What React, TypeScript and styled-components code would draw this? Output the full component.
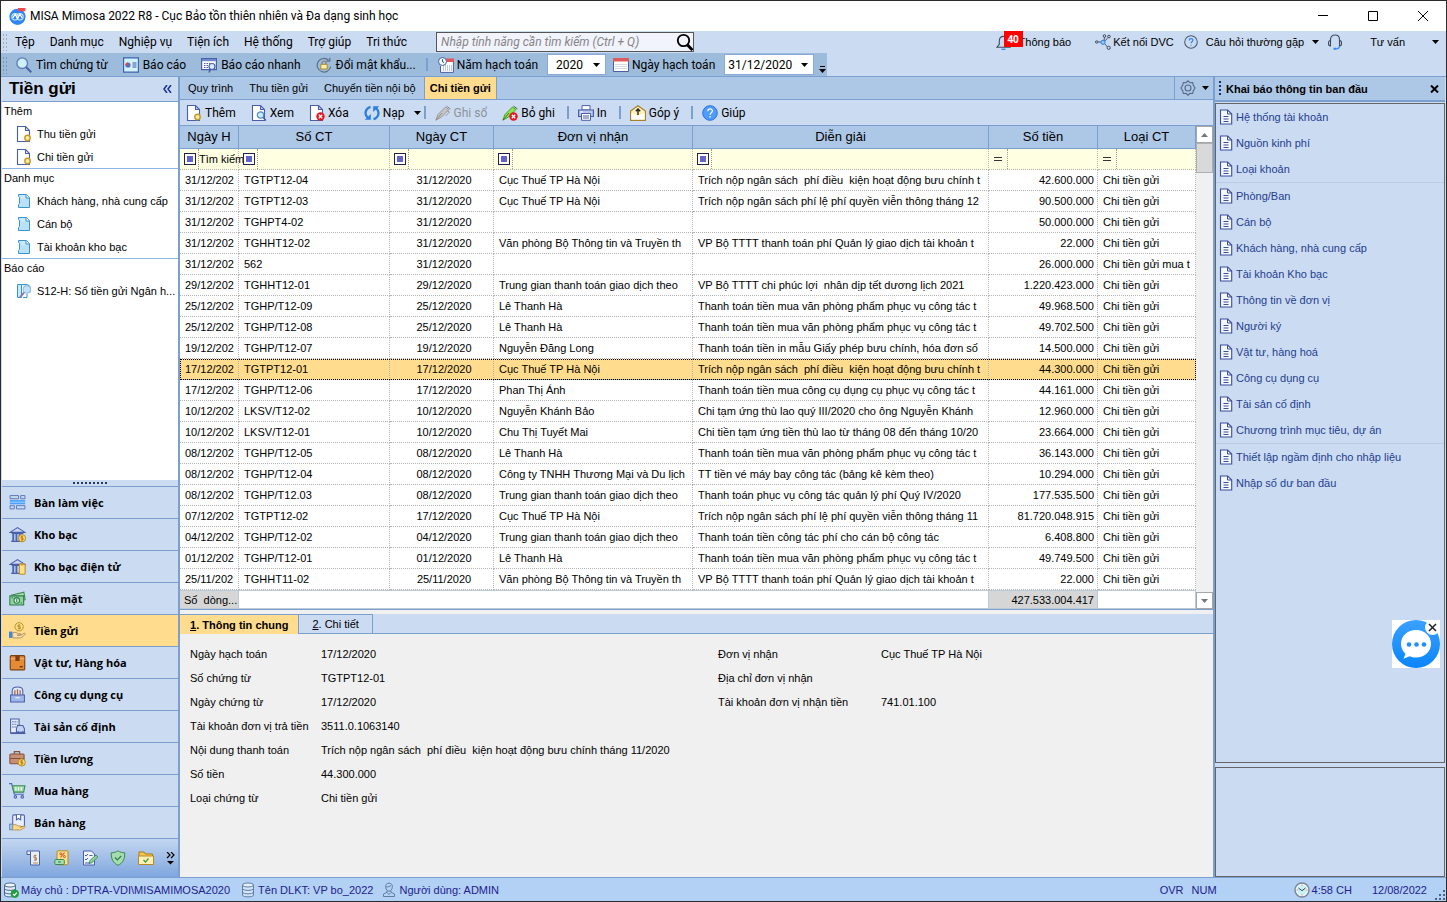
import React from "react";
import styled, { createGlobalStyle, css } from "styled-components";

const c = {
  light: "#cbdbf1",
  bar: "#9dbbdb",
  mid: "#adc7e7",
  line: "#7ba0d0",
  active: "#ffdc8e",
  status: "#b3d0f5",
  grey: "#f0f0f0",
  navy: "#1f4090",
};
const sans = `"Liberation Sans", Arial, sans-serif`;
const ui = `Roboto, "Segoe UI", sans-serif`;

const Global = createGlobalStyle`
  * { box-sizing: border-box; }
  body { margin: 0; font-family: ${sans}; font-size: 11px; line-height: 14px; color: #000; }
  button, input, select { font: inherit; color: inherit; margin: 0; padding: 0; border: 0; background: none; border-radius: 0; }
  button { white-space: nowrap; }
  svg { display: block; flex: none; }
`;

/* ---------- icons ---------- */
type IconProps = { s?: number; children: React.ReactNode };
const Svg = ({ s = 16, children }: IconProps) => (
  <svg width={s} height={s} viewBox="0 0 16 16" fill="none" aria-hidden="true">
    {children}
  </svg>
);
const Arrow = ({ color = "#000" }: { color?: string }) => (
  <svg width="7" height="4" viewBox="0 0 7 4" aria-hidden="true">
    <path d="M0 0h7L3.5 4z" fill={color} />
  </svg>
);
const B = "#4a5fa8";
const pageShape = <path d="M1.5.5h8l4 4v11h-12z M9.500.5v4h4" fill="#fff" stroke={B} strokeWidth="1.1" />;

const icons: Record<string, React.ReactNode> = {
  logo: (
    <>
      <circle cx="8" cy="8.3" r="7.6" fill="#2f86f0" />
      <circle cx="5.7" cy="8.3" r="3" stroke="#cfe6ff" />
      <circle cx="10.3" cy="8.3" r="3" stroke="#cfe6ff" />
      <path d="M3.5 9.500 5.700 6 8 9.500 10.300 6l2.200 3.500" stroke="#fff" strokeWidth="1.1" />
      <path d="M8.500 0h7v3h-7z" fill="#f04a4a" />
    </>
  ),
  search: (
    <>
      <circle cx="6.2" cy="6.2" r="5.300" fill="#cfeefe" stroke="#5c7eb4" strokeWidth="1.300" />
      <path d="m10 10 5.300 5.300" stroke="#4a62a8" strokeWidth="2" />
    </>
  ),
  report: (
    <>
      <path d="M.6.900h14.800v14.300H.6z" fill="#d3f0fd" stroke="#3d63b0" strokeWidth="1.2" />
      <circle cx="5" cy="8" r="2.600" fill="#5b6fb4" />
      <path d="M5 8V5.400A2.600 2.600 0 0 0 2.400 8z" fill="#e04545" />
      <path d="M9.500 6h4M9.500 8h4M9.500 10h4" stroke="#3a57a0" />
    </>
  ),
  quick: (
    <>
      <path d="M.6 1.600h14.800v11H.6z" fill="#fff" stroke={B} strokeWidth="1.2" />
      <path d="M1 2h14v2.200H1z" fill="#7089c8" />
      <path d="M3 6.500h8M3 8.500h6M3 10.500h5" stroke={B} strokeDasharray="1.5 1" />
      <circle cx="11" cy="9.500" r="3" fill="#d6f0ff" stroke={B} strokeWidth="1.2" />
      <path d="m9.500 12-1.500 3.500" stroke={B} strokeWidth="1.6" />
    </>
  ),
  lock: (
    <>
      <path d="M12.600 3.200A6.800 6.800 0 1 0 14.700 9.500" stroke="#5f7089" strokeWidth="1.200" />
      <path d="M13.800.8v3.400h-3.600" stroke="#5f7089" strokeWidth="1.200" />
      <path d="M4.800 7.300h6.400v4.700H4.800z" fill="#fff0a8" stroke="#b08a28" />
      <path d="M6 7.200V6a2 2 0 0 1 4 0v1.200" stroke="#8b7a50" />
    </>
  ),
  calClock: (
    <>
      <path d="M3.500 2.500h11.900v12.900H2.500V9" fill="#fff" stroke={B} />
      <path d="M6 1.500h10v3.500H6z" fill="#e05555" />
      <path d="M5 9h9M5 11h9M5 13h9" stroke="#8090b8" strokeDasharray="1 1" />
      <circle cx="4.500" cy="4.500" r="4" fill="#eef6ff" stroke={B} />
      <path d="M4.500 2.300v2.400l1.500.800" stroke="#444" />
    </>
  ),
  cal: (
    <>
      <path d="M.5 1.500h15v13H.5z" fill="#fff" stroke={B} />
      <path d="M0 1h16v3.500H0z" fill="#dd5a5a" />
      <path d="M2.500 7.500h11M2.500 9.500h11M2.500 11.500h11" stroke="#a9b4cc" strokeDasharray="1 1" />
    </>
  ),
  add: (
    <>
      {pageShape}
      <circle cx="11.500" cy="12" r="2.700" fill="#fdeaa2" stroke="#c39a2c" strokeWidth="1.4" />
    </>
  ),
  view: (
    <>
      {pageShape}
      <circle cx="9.500" cy="10" r="3.200" fill="#c5ecfb" stroke="#5c86bb" strokeWidth="1.2" />
      <path d="m12 12.500 3 3" stroke="#4a62a8" strokeWidth="1.5" />
    </>
  ),
  del: (
    <>
      {pageShape}
      <circle cx="11.500" cy="11.500" r="4.200" fill="#e01820" />
      <path d="m9.800 9.800 3.400 3.400m0-3.400-3.400 3.400" stroke="#fff" strokeWidth="1.3" />
    </>
  ),
  reload: (
    <>
      <path d="M6.500 1.800C1 3.500 0 9.500 4 13" stroke="#2c7fe0" strokeWidth="2.300" />
      <path d="M.8 14.800h6V9z" fill="#2c7fe0" />
      <path d="M9.500 14.200C15 12.500 16 6.500 12 3" stroke="#2c7fe0" strokeWidth="2.300" />
      <path d="M15.200 1.200h-6v5.800z" fill="#2c7fe0" />
    </>
  ),
  penGrey: (
    <>
      <path d="M.8 15.200 3 9.500 10.500 2l3.500 2.500L6.500 12z" fill="#c4c4c4" stroke="#999" />
      <path d="M1 15 7 8M11.500 1l4 3" stroke="#8e8e8e" />
      <path d="M12 5.500 14.500 7l-4 4" stroke="#999" />
    </>
  ),
  penGreen: (
    <>
      <path d="M.8 15.200 3 9.500 10.500 2l3.500 2.500L6.500 12z" fill="#8ee34a" stroke="#4f9a2a" />
      <path d="M1 15 7 8M11.500 1l4 3" stroke="#3f7a22" />
      <circle cx="11.500" cy="11.500" r="4.200" fill="#e01820" />
      <path d="m9.800 9.800 3.400 3.400m0-3.400-3.400 3.400" stroke="#fff" strokeWidth="1.3" />
    </>
  ),
  print: (
    <>
      <path d="M4 .6h8V5H4z" fill="#fff" stroke={B} />
      <path d="M.6 5h14.800v6.500H.6z" fill="#b9c8ea" stroke={B} strokeWidth="1.2" />
      <path d="M3.500 8.500h9v6.800h-9z" fill="#fff" stroke={B} />
      <path d="M5 11h6M5 13h6" stroke={B} />
      <path d="M2 7h3" stroke="#fff" />
    </>
  ),
  mail: (
    <>
      <path d="M.6 6 8 .8 15.400 6v9.400H.6z" fill="#fff1b8" stroke="#a8812a" strokeWidth="1.2" />
      <path d="M1.400 14.600V8L8 11l6.600-3v6.600z" fill="#fff" />
      <path d="M8 10V4.500M5.800 6.200 8 4l2.200 2.200" stroke="#222" strokeWidth="1.4" />
    </>
  ),
  help: (
    <>
      <circle cx="8" cy="8" r="7.300" fill="#4d9bfa" stroke="#2f73d8" />
      <path d="M5.800 6.200C5.800 3.200 10.500 3.300 10.400 6c0 1.700-2.300 1.700-2.300 3.700M8.100 11v1.400" stroke="#fff" strokeWidth="1.2" />
    </>
  ),
  helpLine: (
    <>
      <circle cx="8" cy="8" r="7.200" stroke="#4b5a75" strokeWidth="1.200" />
      <path d="M5.900 6.200C5.900 3.400 10.300 3.500 10.200 6c0 1.700-2.200 1.700-2.200 3.500M8 11v1.300" stroke="#2f7fe8" strokeWidth="1.300" />
    </>
  ),
  bell: (
    <>
      <path d="M8 1.500C5 1.500 3.500 3.500 3.500 6.500V10l-2.500 3h14L12.500 10V6.500C12.500 3.500 11 1.500 8 1.500z" stroke="#3f4a5e" strokeWidth="1.2" />
      <path d="M6 14.500c1 1.200 3 1.200 4 0" stroke="#2f8cf0" strokeWidth="1.4" />
    </>
  ),
  net: (
    <>
      <path d="M3 8h4M9 7l.500-4M9.500 9.500l3 3.500M9.500 7.500l3.500-4" stroke="#4b5a75" />
      <circle cx="8" cy="8.300" r="2.100" fill="#8fc5ff" stroke="#2f7fe8" />
      <circle cx="1.700" cy="8" r="1.200" stroke="#3f4a5e" />
      <circle cx="9.500" cy="2" r="1.300" stroke="#3f4a5e" />
      <circle cx="14" cy="2.500" r="1.300" stroke="#3f4a5e" />
      <circle cx="13.700" cy="13.800" r="1.600" stroke="#3f4a5e" />
    </>
  ),
  headset: (
    <>
      <path d="M3.500 7V5.500C3.500 2.500 5.500 1 8 1s4.500 1.500 4.500 4.500V7" stroke="#3f4a5e" strokeWidth="1.1" />
      <path d="M3.500 6.500C.8 6.500.8 12 3.500 12zM12.500 6.500c2.700 0 2.700 5.500 0 5.500z" stroke="#3f4a5e" strokeWidth="1.1" />
      <path d="M12.500 12c0 2-1.500 2.800-3.500 2.800" stroke="#2f8cf0" strokeWidth="1.3" />
      <path d="M6.500 14.800h2.500" stroke="#2f8cf0" strokeWidth="2" />
    </>
  ),
  gear: (
    <>
      <path d="M8 .8 10 2.700l2.700-.2.500 2.600L15 8l-1.800 2.900-.5 2.600-2.700-.2L8 15.200l-2-1.900-2.700.2-.5-2.600L1 8l1.800-2.900.5-2.600 2.700.2z" stroke="#56688a" strokeWidth="1.1" />
      <circle cx="8" cy="8" r="3" stroke="#56688a" strokeWidth="1.1" />
    </>
  ),
  bluePage: (
    <>
      <path d="M2.500 1.500h8L13.500 4.500v10h-11v-3l1-1v-6l-1-1z" fill="#b9e1fb" stroke="#3a93d2" />
      <path d="M10 1.500v3.500h3.500" fill="#fff" stroke="#3a93d2" />
      <path d="M5 3h4M5 5h4" stroke="#e3f5ff" />
    </>
  ),
  sheetView: (
    <>
      <path d="M1.500 1.500h4v13h-4zM5.500 1.500h6l2.500 2v6" fill="#c6e8fc" stroke="#3a93d2" />
      <circle cx="10.800" cy="6.500" r="3.800" fill="#bfe3fb" stroke="#8fb5dc" />
      <path d="m8 9.500-4 5" stroke="#7b74c9" strokeWidth="2" />
      <path d="M7 14.500h4V11" stroke="#3a93d2" />
    </>
  ),
  doc: (
    <>
      <path d="M2.500 1h7.200l4 4v10H2.500z" fill="#f4f8ff" stroke="#3b4f9c" strokeWidth="1.1" />
      <path d="M9.500 1v4h4" stroke="#3b4f9c" />
      <path d="M5.500 7.500h5M5.500 10h5M5.500 12.500h5" stroke="#3b4f9c" />
    </>
  ),
  desk: (
    <>
      <path d="M.8 5.700h14.400v4H.8z" fill="#4da0ff" />
      <path d="M1 1.500h8v3H1zM11 1.500h4v3h-4zM1 11h4v3H1zM7 11h8v3H7z" fill="#c8dcfa" stroke="#5873b5" strokeWidth=".9" />
      <path d="M1 7.700h14" stroke="#b4dcff" strokeWidth=".8" />
    </>
  ),
  bank: (
    <>
      <path d="M1 6 8 1.500 15 6z" fill="#c8d5f3" stroke={B} />
      <path d="M2 14.500h12M2.500 7h11" stroke={B} strokeWidth="1.2" />
      <path d="M4 7v7M7 7v7M10 7v7" stroke="#4a62b4" strokeWidth="1.8" />
      <circle cx="12.300" cy="11.500" r="3.400" fill="#fbd66a" stroke="#b98a22" strokeWidth=".9" />
      <path d="M13.300 10h-2v1.500h2V13h-2M12.300 9v5" stroke="#a87818" strokeWidth=".7" />
    </>
  ),
  bankE: (
    <>
      <path d="M1 6 8 1.500 15 6z" fill="#c8d5f3" stroke={B} />
      <path d="M2 14.500h9M2.500 7h11" stroke={B} strokeWidth="1.2" />
      <path d="M4 7v7M7 7v7" stroke="#4a62b4" strokeWidth="1.8" />
      <rect x="9.700" y="5.500" width="5.500" height="9.800" rx="1.300" fill="#fde08a" stroke="#b98a22" />
      <path d="M11.500 6.500h2" stroke="#b98a22" />
    </>
  ),
  cash: (
    <>
      <path d="M2 5 14 2l1.200 7L13 10" fill="#a8deb0" stroke="#3d8a56" />
      <path d="M.8 5.500h13v8.700H.8z" fill="#8fd3a0" stroke="#2f7d4b" />
      <circle cx="7.300" cy="9.800" r="2.600" fill="#d8f3dc" stroke="#2f7d4b" />
      <path d="M7.300 8.300v3M2.500 7.300h1.300M11 12.300h1.300" stroke="#2f7d4b" />
    </>
  ),
  deposit: (
    <>
      <circle cx="9.500" cy="4.500" r="3.900" fill="#fbe08a" stroke="#b98a22" strokeWidth=".9" />
      <path d="M10.800 3H8.400v1.600h2.300v1.600H8.300M9.500 2v5.200" stroke="#b98a22" strokeWidth=".8" />
      <path d="M0 9h3v6H0z" fill="#3c86ea" />
      <path d="M3.500 9.800h3l2 1.200h2c1 0 1 1.400 0 1.400H7.500 11l3.500-1.800c1 0 1.200 1 .3 1.600L11 15H3.500z" fill="#fbe3ae" stroke="#a9885a" strokeWidth=".8" />
    </>
  ),
  box: (
    <>
      <rect x="1.200" y="1.500" width="13.600" height="13.500" rx="1" fill="#e58a35" stroke="#7b4418" strokeWidth="1.1" />
      <path d="M1.500 4.500h13" stroke="#f5b06a" />
      <path d="M6 1.500h4v5H6z" fill="#7b3c18" />
      <path d="M10 12h3" stroke="#5a2c0c" strokeWidth="1.2" />
    </>
  ),
  tools: (
    <>
      <path d="M3 9V4.500C3 2.500 5 1 8 1s5 1.500 5 3.500V9z" fill="#dfe7f8" stroke={B} />
      <path d="M5.500 9V4M8 9V3M10.500 9V4" stroke="#a86a48" strokeWidth="1.2" />
      <path d="M1.500 8.500h13V15h-13z" fill="#9db6ec" stroke={B} />
      <path d="M6 11h4" stroke="#e6efff" strokeWidth="1.2" />
    </>
  ),
  asset: (
    <>
      <path d="M1.500 1h8v13h-8z" fill="#e6edfb" stroke={B} />
      <path d="M3 3.500h5M3 6h5M3 8.500h4" stroke="#6f86c4" strokeDasharray="1.3 .8" strokeWidth="1.3" />
      <path d="m7 10 1-3h5l1.500 3v3.500H7z" fill="#c4d3f2" stroke={B} />
      <path d="M1.500 14.500h14" stroke={B} strokeWidth="1.2" />
      <circle cx="8.700" cy="13.500" r="1" fill={B} />
      <circle cx="13" cy="13.500" r="1" fill={B} />
    </>
  ),
  salary: (
    <>
      <path d="M5 4V1.500h5V4" stroke="#84513c" strokeWidth="1.1" />
      <rect x=".8" y="3.800" width="13.400" height="9.200" rx="1" fill="#c98f74" stroke="#84513c" />
      <path d="M1 8h13" stroke="#84513c" />
      <circle cx="12" cy="11.700" r="3.400" fill="#fbd66a" stroke="#b98a22" strokeWidth=".9" />
      <path d="M13 10.200h-2v1.500h2v1.500h-2M12 9.200v5" stroke="#a87818" strokeWidth=".7" />
    </>
  ),
  cart: (
    <>
      <path d="M0 1.500h2.500L5 11.500h9" stroke="#4a72b8" strokeWidth="1.1" />
      <path d="M3.200 3.500H15l-1.200 6H4.600z" fill="#9edba8" stroke="#3d8a56" />
      <path d="M6.500 5v3M9 5v3M11.500 5v3" stroke="#fff" />
      <circle cx="6" cy="14" r="1.200" stroke="#4f62b0" />
      <circle cx="12.500" cy="14" r="1.200" stroke="#4f62b0" />
    </>
  ),
  sell: (
    <>
      <rect x="3.500" y=".8" width="11" height="11" rx="1" fill="#e9f0ff" stroke={B} />
      <path d="M7 1v4.500l2-1.300 2 1.300V1" fill="#fff" stroke={B} />
      <path d="M.3 9.500h3.200v5.300H.3z" fill="#8fc4f7" stroke="#4a72b8" strokeWidth=".7" />
      <path d="M3.500 10h3l2 1.200h2.200c1 0 1 1.300 0 1.300H11l3.500-1.200c.9.200 1 1 .2 1.500L11 15H3.500z" fill="#fbd98d" stroke="#b98a4a" strokeWidth=".8" />
    </>
  ),
  invoice: (
    <>
      <path d="M1 1h12.500v14H4.500V4.500H1z" fill="#e7eefc" stroke={B} />
      <path d="M4.500 4.500V1.500" stroke={B} />
      <path d="M10.500 5.500H8v2.300h2.500V10H8M9.200 4.500v6.500M7 13h5" stroke="#b98a4a" />
    </>
  ),
  tax: (
    <>
      <rect x="3" y=".8" width="11" height="14" rx="1" fill="#fbe08a" stroke="#b98a22" />
      <path d="m6.500 7.500 4-5" stroke="#d8502a" strokeWidth="1.1" />
      <circle cx="6.800" cy="3.800" r="1" stroke="#d8502a" />
      <circle cx="10.300" cy="6.500" r="1" stroke="#d8502a" />
      <rect x=".8" y="9.500" width="9.500" height="5" rx="1" fill="#a8deb0" stroke="#3d8a56" />
      <path d="M4 12h3" stroke="#3d8a56" strokeWidth="1.2" />
    </>
  ),
  note: (
    <>
      <path d="M1.500 1h8l3 3v11h-11z" fill="#eef3fe" stroke={B} />
      <path d="m3 5 1 1 2-2M3 9l1 1 2-2M7.500 5.500h3M3 13h5" stroke={B} />
      <path d="m7 13.500 1-3 6-5.500 1.800 2L10 12.700z" fill="#93d2a0" stroke="#3d8a56" strokeWidth=".9" />
    </>
  ),
  shield: (
    <>
      <path d="M8 .8c2 1.500 4.500 2 6.800 2C14.800 9 13 13 8 15.300 3 13 1.200 9 1.200 2.800 3.500 2.800 6 2.300 8 .8z" fill="#a4dcae" stroke="#3d8a56" />
      <path d="m5 7.500 2.300 2.500L11.200 6" stroke="#2f7d4b" strokeWidth="1.2" />
    </>
  ),
  folder: (
    <>
      <path d="M1 14V2h5l1.500 2h7v10z" fill="#f6c64a" stroke="#a87818" />
      <path d="M.5 6h15v8.500H.5z" fill="#fff0b8" stroke="#b98a22" />
      <path d="m5.500 10 2 2 3-3.500" stroke="#3f9a3a" strokeWidth="1.2" />
    </>
  ),
  dbOk: (
    <>
      <path d="M1.500 3v10c0 2.500 11 2.500 11 0V3" fill="#dfeaf8" stroke="#4b6b8e" />
      <ellipse cx="7" cy="3" rx="5.500" ry="2" fill="#f2f7fd" stroke="#4b6b8e" />
      <path d="M1.500 6.500c0 2.500 11 2.500 11 0M1.500 10c0 2.500 11 2.500 11 0" stroke="#4b6b8e" />
      <circle cx="11.800" cy="11.800" r="4.100" fill="#1f9e3d" />
      <path d="m10 12 1.500 1.300 2.300-2.600" stroke="#fff" strokeWidth="1.2" />
    </>
  ),
  db: (
    <>
      <path d="M2.500 3v10c0 2.500 11 2.500 11 0V3" fill="#d3e4f8" stroke="#5f7fa4" />
      <ellipse cx="8" cy="3" rx="5.500" ry="2" fill="#e6f0fb" stroke="#5f7fa4" />
      <path d="M2.500 6.500c0 2.500 11 2.500 11 0M2.500 10c0 2.500 11 2.500 11 0" stroke="#5f7fa4" />
    </>
  ),
  user: (
    <>
      <path d="M8 1.200c-2.700 0-3.600 1.800-3.300 4 .3 2.500 1.600 4 3.300 4s3-1.500 3.300-4c.3-2.200-.6-4-3.300-4z" stroke="#5f7fa4" />
      <path d="M6 8.800v1.400L2.500 12v2.500h11V12L10 10.200V8.800M5 5c2 0 4-.5 5-1.500M6 10.500l2 2 2-2" stroke="#5f7fa4" />
    </>
  ),
  clock: (
    <>
      <circle cx="8" cy="8" r="7" fill="#c9f0f5" stroke="#7a8794" strokeWidth="1.4" />
      <circle cx="8" cy="8" r="5.500" stroke="#fff" />
      <path d="M4.500 6 8 8.700 11.500 6" stroke="#3f4a5e" />
      <path d="M8 2.500v1M8 12.500v1M2.500 8h1M12.500 8h1" stroke="#e05555" />
    </>
  ),
};
const Icon = ({ n, s }: { n: string; s?: number }) => <Svg s={s}>{icons[n]}</Svg>;

/* ---------- frame ---------- */
const Window = styled.div`
  min-height: 100vh;
  display: flex;
  flex-direction: column;
  border: 1px solid #2b2b2b;
  background: ${c.light};
`;
const TitleBar = styled.header`
  height: 30px;
  display: flex;
  align-items: center;
  gap: 4px;
  padding-left: 8px;
  background: #fff;
`;
const Title = styled.h1`
  flex: 1;
  margin: 0;
  font: 400 12px/16px ${ui};
`;
const WinButton = styled.button`
  width: 46px;
  height: 30px;
  display: grid;
  place-items: center;
`;
const Grip = styled.span<{ $c?: string }>`
  width: 6px;
  height: 18px;
  flex: none;
  background-image: radial-gradient(${(p) => p.$c || "#a3adba"} 1px, transparent 1px);
  background-size: 3px 4px;
`;
const MenuBar = styled.nav`
  height: 22px;
  display: flex;
  align-items: center;
  padding: 0 7px 0 1px;
`;
const MenuItem = styled.button`
  padding: 0 8px 0 7px;
  font: 400 12px/16px ${ui};
`;
const Spacer = styled.span`
  flex: 1;
`;
const SearchBox = styled.div`
  width: 258px;
  height: 20px;
  margin-left: 21px;
  display: flex;
  align-items: center;
  border: 1px solid #555;
  background: #f1f3fd;
  padding-left: 4px;
  input {
    flex: 1;
    min-width: 0;
    outline: 0;
    font: italic 400 12px/16px ${ui};
  }
  input::placeholder {
    color: #858585;
    opacity: 1;
  }
`;
const Utility = styled.button<{ $gap?: number; $ml?: number }>`
  position: relative;
  display: flex;
  align-items: center;
  gap: ${(p) => p.$gap ?? 3}px;
  margin-left: ${(p) => p.$ml ?? 0}px;
  line-height: 16px;
`;
const Badge = styled.span`
  position: absolute;
  left: 8px;
  top: -3px;
  width: 19px;
  height: 16px;
  background: #f00;
  color: #fff;
  font: 700 10px/16px "Open Sans", sans-serif;
`;
const ToolStrip = styled.div`
  height: 23px;
  display: flex;
`;
const Tools = styled.div`
  height: 23px;
  padding: 0 1px;
  background: ${c.bar};
  display: flex;
  align-items: center;
`;
const ToolButton = styled.button`
  height: 22px;
  display: flex;
  align-items: center;
  gap: 4px;
  padding: 0 7px 0 8px;
  font: 400 12px/16px ${ui};
  &:disabled {
    color: #8b929c;
  }
`;
const Sep = styled.span`
  width: 2px;
  height: 13px;
  flex: none;
  margin: 0 3px;
  background: ${c.line};
`;
const Field = styled.label`
  display: flex;
  align-items: center;
  gap: 3px;
  padding-left: 7px;
  white-space: nowrap;
  font: 400 12px/16px ${ui};
`;
const Combo = styled.span<{ $w: number }>`
  position: relative;
  width: ${(p) => p.$w}px;
  height: 21px;
  margin-left: 6px;
  border: 1px solid #8aa8dc;
  background: #fff;
  select {
    appearance: none;
    width: 100%;
    height: 100%;
    padding-left: ${(p) => (p.$w < 70 ? 8 : 3)}px;
    outline: 0;
  }
  svg {
    position: absolute;
    right: 5px;
    top: 8px;
    pointer-events: none;
  }
`;
const Overflow = styled.button`
  margin: 10px 0 0 5px;
  display: grid;
  gap: 2px;
  &::before {
    content: "";
    width: 5px;
    height: 1px;
    margin-left: 1px;
    background: #000;
  }
`;
const Main = styled.main`
  flex: 1;
  display: grid;
  grid-template-columns: 179px minmax(0, 1fr) 233px;
  border-top: 1px solid ${c.line};
`;

/* ---------- left ---------- */
const Sidebar = styled.aside`
  display: flex;
  flex-direction: column;
  border-right: 2px solid ${c.line};
  padding-left: 1px;
`;
const SideHead = styled.div`
  height: 25px;
  display: flex;
  align-items: center;
  justify-content: space-between;
  padding: 0 6px 0 7px;
  border-bottom: 1px solid ${c.line};
  h2 {
    margin: 0;
    font: 700 17px/22px ${sans};
  }
`;
const Tree = styled.div`
  flex: 1;
  background: #fff;
`;
const Group = styled.section<{ $last?: boolean }>`
  border-bottom: ${(p) => (p.$last ? 0 : 1)}px solid #8fb4e8;
  h3 {
    margin: 0 0 2px;
    padding-left: 2px;
    font: 400 11px/18px ${sans};
  }
`;
const Leaf = styled.a`
  height: 23px;
  display: flex;
  align-items: center;
  gap: 5px;
  padding-left: 14px;
  color: #000;
  text-decoration: none;
  white-space: nowrap;
`;
const Splitter = styled.div`
  height: 6px;
  display: grid;
  place-items: center;
  &::before {
    content: "";
    width: 35px;
    height: 2px;
    background: repeating-linear-gradient(90deg, #2b3a5c 0 2px, transparent 2px 4px);
  }
`;
const NavButton = styled.button<{ $on?: boolean }>`
  height: 32px;
  display: flex;
  align-items: center;
  gap: 8px;
  padding-left: 7px;
  border-top: 1px solid ${c.line};
  background: ${(p) => (p.$on ? c.active : c.light)};
  font: 700 11px/16px "Open Sans", Tahoma, sans-serif;
`;
const NavFoot = styled.div`
  height: 39px;
  display: flex;
  align-items: center;
  gap: 12px;
  padding-left: 24px;
  border-top: 1px solid ${c.line};
  background: linear-gradient(#c3d6f0, #7fa6de);
`;

/* ---------- centre ---------- */
const Centre = styled.section`
  display: flex;
  flex-direction: column;
  min-width: 0;
`;
const Tabs = styled.div`
  height: 23px;
  display: flex;
  background: ${c.mid};
  border-bottom: 1px solid ${c.line};
`;
const Tab = styled.button<{ $on?: boolean }>`
  height: 22px;
  padding: 0 8px;
  ${(p) =>
    p.$on &&
    css`
      padding: 0 5px;
      background: ${c.active};
      border-left: 1px solid ${c.line};
      border-right: 1px solid ${c.line};
      font-weight: 700;
    `}
`;
const GearButton = styled.button`
  width: 39px;
  display: flex;
  align-items: center;
  gap: 6px;
  padding-left: 5px;
  border-left: 1px solid ${c.line};
`;
const GridTools = styled.div`
  height: 26px;
  display: flex;
  align-items: center;
  border-bottom: 1px solid ${c.line};
  ${ToolButton} {
    gap: 3px;
    padding: 0 9px 0 6px;
  }
`;
const GridArea = styled.div`
  display: flex;
  border-bottom: 1px solid ${c.line};
`;
const dots = "1px dotted #b4b4b4";
const Table = styled.table`
  flex: 1;
  width: 100%;
  min-width: 0;
  table-layout: fixed;
  border-collapse: separate;
  border-spacing: 0;
  background: #fff;
  th {
    height: 23px;
    padding: 0;
    background: ${c.mid};
    border-right: 1px solid ${c.line};
    border-bottom: 1px solid ${c.line};
    font: 400 13px/20px ${sans};
    white-space: nowrap;
    overflow: hidden;
  }
  td {
    height: 21px;
    padding: 0 0 0 5px;
    border-right: ${dots};
    border-bottom: ${dots};
    white-space: pre;
    overflow: hidden;
  }
`;
const FilterRow = styled.tr`
  background: #ffffe1;
  && td {
    overflow: visible;
    padding: 0 0 0 3px;
  }
`;
const FilterCell = styled.div`
  display: flex;
  align-items: center;
  height: 20px;
  input {
    width: 46px;
    height: 20px;
    flex: none;
    outline: 0;
    border-left: 1px dotted #999;
  }
`;
const FilterButton = styled.button<{ $eq?: boolean }>`
  position: relative;
  width: 12px;
  height: 12px;
  flex: none;
  margin: 0 2px 0 1px;
  ${(p) =>
    p.$eq
      ? css`
          background: linear-gradient(transparent 4px, #333 4px 5px, transparent 5px 7px, #333 7px 8px, transparent 8px)
            1px 0 / 8px 12px no-repeat;
        `
      : css`
          border: 1px solid #22224c;
          background: #6363cc;
          box-shadow: inset 0 0 0 2px #fff;
        `}
`;
const Row = styled.tr<{ $on?: boolean }>`
  td:nth-child(3) {
    text-align: center;
  }
  td:nth-child(6) {
    text-align: right;
    padding-right: 3px;
  }
  ${(p) =>
    p.$on &&
    css`
      background: ${c.active};
      outline: 1px dotted #000;
      outline-offset: -1px;
    `}
`;
const SumRow = styled.tr`
  && td {
    height: 19px;
    border: 1px solid #bccad8;
    border-left: 0;
  }
  && td:nth-child(1),
  && td:nth-child(3) {
    background: #d6d6d6;
  }
  && td:nth-child(1) {
    padding-left: 4px;
  }
  && td:nth-child(3) {
    text-align: right;
    padding-right: 3px;
  }
`;
const Scroll = styled.div`
  width: 17px;
  flex: none;
  display: flex;
  flex-direction: column;
  background: #f0f0f0;
`;
const ScrollButton = styled.button<{ $up?: boolean }>`
  height: 17px;
  display: grid;
  place-items: center;
  border: 1px solid #a6a6a6;
  background: #fff;
  svg {
    transform: ${(p) => (p.$up ? "rotate(180deg)" : "none")};
  }
`;
const Thumb = styled.span`
  height: 30px;
  border: 1px solid #b0b0b0;
  background: #d9d9d9;
`;
const DetailTabs = styled.div`
  height: 20px;
  margin-top: 4px;
  display: flex;
  border-bottom: 1px solid ${c.line};
  background: ${c.light};
`;
const DetailTab = styled.button<{ $on?: boolean }>`
  height: ${(p) => (p.$on ? 20 : 19)}px;
  padding: 0 ${(p) => (p.$on ? 10 : 13)}px;
  background: ${(p) => (p.$on ? c.active : c.light)};
  border-top: 1px solid ${c.line};
  border-right: 1px solid ${c.line};
  font-weight: ${(p) => (p.$on ? 700 : 400)};
`;
const Detail = styled.div`
  flex: 1;
  display: grid;
  grid-template-columns: 528px 1fr;
  align-items: start;
  padding: 8px 10px;
`;
const Facts = styled.dl<{ $w: number }>`
  margin: 0;
  display: grid;
  grid-template-columns: ${(p) => p.$w}px 1fr;
  line-height: 24px;
  white-space: pre;
  dd {
    margin: 0;
  }
`;
const Lower = styled.div`
  flex: 1;
  display: flex;
  flex-direction: column;
  background: ${c.grey};
`;

/* ---------- right ---------- */
const Panel = styled.aside`
  display: flex;
  flex-direction: column;
  border-left: 2px solid ${c.line};
  padding-right: 1px;
`;
const PanelHead = styled.div`
  height: 25px;
  display: flex;
  align-items: center;
  padding: 0 6px 0 2px;
  gap: 3px;
  background: ${c.mid};
  border-bottom: 2px solid ${c.line};
  h2 {
    flex: 1;
    margin: 0;
    font: 700 11px/16px ${sans};
  }
`;
const Dots = styled.span`
  width: 6px;
  height: 15px;
  background: linear-gradient(#1f2f66 2px, transparent 2px) 2px 0 / 2px 4px repeat-y;
`;
const PanelBox = styled.div<{ $h?: number }>`
  ${(p) => (p.$h ? `height: ${p.$h}px; margin-top: 4px;` : "flex: 1; margin-top: 1px;")}
  border: 1px solid #666;
`;
const PanelGroup = styled.div`
  & + & {
    border-top: 1px solid #bccbe4;
  }
`;
const PanelLink = styled.a`
  height: 26px;
  display: flex;
  align-items: center;
  gap: 2px;
  padding-left: 2px;
  color: ${c.navy};
  text-decoration: none;
`;
const Chat = styled.div`
  position: fixed;
  right: 7px;
  bottom: 234px;
  width: 48px;
  height: 48px;
  background: #fff;
  > button {
    display: block;
  }
`;
const ChatClose = styled.button`
  position: absolute;
  right: 0;
  top: 0;
  width: 15px;
  height: 15px;
  border-radius: 8px;
  background: #fff;
`;

/* ---------- status ---------- */
const Status = styled.footer`
  height: 24px;
  display: flex;
  align-items: center;
  padding: 0 19px 0 2px;
  background: ${c.status};
  border-top: 1px solid ${c.line};
  color: #22228c;
  position: relative;
`;
const StatusItem = styled.span<{ $mr: number }>`
  display: flex;
  align-items: center;
  gap: 2px;
  margin-right: ${(p) => p.$mr}px;
`;

/* ---------- data ---------- */
const menu = ["Tệp", "Danh mục", "Nghiệp vụ", "Tiện ích", "Hệ thống", "Trợ giúp", "Tri thức"];
const tree: { title: string; icon: string; items: string[] }[] = [
  { title: "Thêm", icon: "add", items: ["Thu tiền gửi", "Chi tiền gửi"] },
  { title: "Danh mục", icon: "bluePage", items: ["Khách hàng, nhà cung cấp", "Cán bộ", "Tài khoản kho bạc"] },
  { title: "Báo cáo", icon: "sheetView", items: ["S12-H: Sổ tiền gửi Ngân h..."] },
];
const nav: [string, string][] = [
  ["desk", "Bàn làm việc"],
  ["bank", "Kho bạc"],
  ["bankE", "Kho bạc điện tử"],
  ["cash", "Tiền mặt"],
  ["deposit", "Tiền gửi"],
  ["box", "Vật tư, Hàng hóa"],
  ["tools", "Công cụ dụng cụ"],
  ["asset", "Tài sản cố định"],
  ["salary", "Tiền lương"],
  ["cart", "Mua hàng"],
  ["sell", "Bán hàng"],
];
const shortcuts: [string, string][] = [
  ["invoice", "Hóa đơn"],
  ["tax", "Thuế"],
  ["note", "Ghi chép"],
  ["shield", "Kiểm soát"],
  ["folder", "Hồ sơ"],
];
const tax = "Cục Thuế TP Hà Nội";
const ministry = "Văn phòng Bộ Thông tin và Truyền th";
const centre = "Trung gian thanh toán giao dịch theo";
const stationery = "Thanh toán tiền mua văn phòng phẩm phục vụ công tác t";
const budgetFee = "Trích nộp ngân sách  phí điều  kiện hoạt động bưu chính t";
const vpFee = "VP Bộ TTTT thanh toán phí Quản lý giao dịch tài khoản t";
const rows: string[][] = [
  ["31/12/202", "TGTPT12-04", "31/12/2020", tax, budgetFee, "42.600.000"],
  ["31/12/202", "TGTPT12-03", "31/12/2020", tax, "Trích nộp ngân sách phí lệ phí quyền viễn thông tháng 12", "90.500.000"],
  ["31/12/202", "TGHPT4-02", "31/12/2020", "", "", "50.000.000"],
  ["31/12/202", "TGHHT12-02", "31/12/2020", ministry, vpFee, "22.000"],
  ["31/12/202", "562", "31/12/2020", "", "", "26.000.000", "Chi tiền gửi mua t"],
  ["29/12/202", "TGHHT12-01", "29/12/2020", centre, "VP Bộ TTTT chi phúc lợi  nhân dịp tết dương lịch 2021", "1.220.423.000"],
  ["25/12/202", "TGHP/T12-09", "25/12/2020", "Lê Thanh Hà", stationery, "49.968.500"],
  ["25/12/202", "TGHP/T12-08", "25/12/2020", "Lê Thanh Hà", stationery, "49.702.500"],
  ["19/12/202", "TGHP/T12-07", "19/12/2020", "Nguyễn Đăng Long", "Thanh toán tiền in mẫu Giấy phép bưu chính, hóa đơn số", "14.500.000"],
  ["17/12/202", "TGTPT12-01", "17/12/2020", tax, budgetFee, "44.300.000"],
  ["17/12/202", "TGHP/T12-06", "17/12/2020", "Phan Thị Ánh", "Thanh toán tiền mua công cụ dụng cụ phục vụ công tác t", "44.161.000"],
  ["10/12/202", "LKSV/T12-02", "10/12/2020", "Nguyễn Khánh Bảo", "Chi tạm ứng thù lao quý III/2020 cho ông Nguyễn Khánh", "12.960.000"],
  ["10/12/202", "LKSV/T12-01", "10/12/2020", "Chu Thị Tuyết Mai", "Chi tiền tạm ứng tiền thù lao từ tháng 08 đến tháng 10/20", "23.664.000"],
  ["08/12/202", "TGHP/T12-05", "08/12/2020", "Lê Thanh Hà", stationery, "36.143.000"],
  ["08/12/202", "TGHP/T12-04", "08/12/2020", "Công ty TNHH Thương Mại và Du lịch", "TT tiền vé máy bay công tác (bảng kê kèm theo)", "10.294.000"],
  ["08/12/202", "TGHP/T12.03", "08/12/2020", centre, "Thanh toán phục vụ công tác quản lý phí Quý IV/2020", "177.535.500"],
  ["07/12/202", "TGTPT12-02", "17/12/2020", tax, "Trích nộp ngân sách phí lệ phí quyền viễn thông tháng 11", "81.720.048.915"],
  ["04/12/202", "TGHP/T12-02", "04/12/2020", centre, "Thanh toán tiền công tác phí cho cán bộ công tác", "6.408.800"],
  ["01/12/202", "TGHP/T12-01", "01/12/2020", "Lê Thanh Hà", stationery, "49.749.500"],
  ["25/11/202", "TGHHT11-02", "25/11/2020", ministry, vpFee, "22.000"],
];
const headers = ["Ngày H", "Số CT", "Ngày CT", "Đơn vị nhận", "Diễn giải", "Số tiền", "Loại CT"];
const widths = [59, 151, 104, 199, 0, 109, 98];
const facts: [string, string][] = [
  ["Ngày hạch toán", "17/12/2020"],
  ["Số chứng từ", "TGTPT12-01"],
  ["Ngày chứng từ", "17/12/2020"],
  ["Tài khoản đơn vị trả tiền", "3511.0.1063140"],
  ["Nội dung thanh toán", "Trích nộp ngân sách  phí điều  kiện hoạt động bưu chính tháng 11/2020"],
  ["Số tiền", "44.300.000"],
  ["Loại chứng từ", "Chi tiền gửi"],
];
const payee: [string, string][] = [
  ["Đơn vị nhận", "Cục Thuế TP Hà Nội"],
  ["Địa chỉ đơn vị nhận", ""],
  ["Tài khoản đơn vị nhận tiền", "741.01.100"],
];
const setup = [
  ["Hệ thống tài khoản", "Nguồn kinh phí", "Loại khoản"],
  [
    "Phòng/Ban",
    "Cán bộ",
    "Khách hàng, nhà cung cấp",
    "Tài khoản Kho bạc",
    "Thông tin về đơn vị",
    "Người ký",
    "Vật tư, hàng hoá",
    "Công cụ dụng cụ",
    "Tài sản cố định",
    "Chương trình mục tiêu, dự án",
  ],
  ["Thiết lập ngầm định cho nhập liệu", "Nhập số dư ban đầu"],
];

const Tool = ({ icon, label, disabled }: { icon: string; label: string; disabled?: boolean }) => (
  <ToolButton disabled={disabled}>
    <Icon n={icon} />
    {label}
  </ToolButton>
);
const ResizeGrip = styled.svg`
  position: absolute;
  right: 1px;
  bottom: 1px;
`;
const FactList = ({ items, w }: { items: [string, string][]; w: number }) => (
  <Facts $w={w}>
    {items.map(([k, v]) => (
      <React.Fragment key={k}>
        <dt>{k}</dt>
        <dd>{v}</dd>
      </React.Fragment>
    ))}
  </Facts>
);

export default function App() {
  return (
    <Window>
      <Global />
      <TitleBar>
        <Icon n="logo" s={17} />
        <Title>MISA Mimosa 2022 R8 - Cục Bảo tồn thiên nhiên và Đa dạng sinh học</Title>
        <WinButton aria-label="Thu nhỏ">
          <svg width="10" height="10">
            <path d="M0 4.500h10" stroke="#000" />
          </svg>
        </WinButton>
        <WinButton aria-label="Phóng to">
          <svg width="10" height="10">
            <path d="M.5.5h9v9h-9z" stroke="#000" fill="none" />
          </svg>
        </WinButton>
        <WinButton aria-label="Đóng">
          <svg width="10" height="10">
            <path d="m0 0 10 10M10 0 0 10" stroke="#000" />
          </svg>
        </WinButton>
      </TitleBar>
      <MenuBar>
        <Grip />
        {menu.map((m) => (
          <MenuItem key={m}>{m}</MenuItem>
        ))}
        <SearchBox>
          <input aria-label="Tìm tính năng" placeholder="Nhập tính năng cần tìm kiếm (Ctrl + Q)" />
          <svg width="17" height="18" viewBox="0 0 17 18" fill="none">
            <circle cx="7.500" cy="7.500" r="5.700" stroke="#000" strokeWidth="1.800" />
            <path d="m11.500 12 5 5" stroke="#000" strokeWidth="3" />
          </svg>
        </SearchBox>
        <Spacer />
        <Utility $gap={8}>
          <Icon n="bell" s={15} />
          Thông báo
          <Badge>40</Badge>
        </Utility>
        <Utility $ml={24} $gap={2}>
          <Icon n="net" />
          Kết nối DVC
        </Utility>
        <Utility $ml={10} $gap={8}>
          <Icon n="helpLine" s={14} />
          Câu hỏi thường gặp
          <Arrow />
        </Utility>
        <Utility $ml={8} $gap={27}>
          <Icon n="headset" />
          Tư vấn
          <Arrow />
        </Utility>
      </MenuBar>
      <ToolStrip>
        <Tools>
          <Grip $c="#7f93ad" />
          <Tool icon="search" label="Tìm chứng từ" />
          <Tool icon="report" label="Báo cáo" />
          <Tool icon="quick" label="Báo cáo nhanh" />
          <Tool icon="lock" label="Đổi mật khẩu..." />
          <Sep />
          <Field>
            <Icon n="calClock" />
            Năm hạch toán
            <Combo $w={59}>
              <select defaultValue="2020">
                <option>2020</option>
              </select>
              <Arrow />
            </Combo>
          </Field>
          <Field>
            <Icon n="cal" />
            Ngày hạch toán
            <Combo $w={90}>
              <select defaultValue="31/12/2020">
                <option>31/12/2020</option>
              </select>
              <Arrow />
            </Combo>
          </Field>
          <Overflow aria-label="Tùy chọn">
            <Arrow />
          </Overflow>
        </Tools>
      </ToolStrip>

      <Main>
        <Sidebar>
          <SideHead>
            <h2>Tiền gửi</h2>
            <button aria-label="Thu gọn">
              <svg width="9" height="8" fill="none">
                <path d="M4 0 1 4l3 4M8 0 5 4l3 4" stroke="#15308c" strokeWidth="1.500" />
              </svg>
            </button>
          </SideHead>
          <Tree>
            {tree.map((g, i) => (
              <Group key={g.title} $last={i === 2}>
                <h3>{g.title}</h3>
                {g.items.map((t) => (
                  <Leaf key={t} href="#">
                    <Icon n={g.icon} />
                    {t}
                  </Leaf>
                ))}
              </Group>
            ))}
          </Tree>
          <Splitter />
          {nav.map(([icon, label]) => (
            <NavButton key={label} $on={label === "Tiền gửi"}>
              <Icon n={icon} s={17} />
              {label}
            </NavButton>
          ))}
          <NavFoot>
            {shortcuts.map(([icon, label]) => (
              <button key={icon} aria-label={label}>
                <Icon n={icon} />
              </button>
            ))}
            <button aria-label="Thêm mục">
              <svg width="9" height="13" fill="none">
                <path d="m1 0 3 3-3 3M5 0l3 3-3 3" stroke="#000" strokeWidth="1.200" />
                <path d="M1 9h7l-3.500 3.500z" fill="#000" />
              </svg>
            </button>
          </NavFoot>
        </Sidebar>

        <Centre>
          <Tabs>
            <Tab>Quy trình</Tab>
            <Tab>Thu tiền gửi</Tab>
            <Tab>Chuyển tiền nội bộ</Tab>
            <Tab $on>Chi tiền gửi</Tab>
            <Spacer />
            <GearButton aria-label="Thiết lập">
              <Icon n="gear" />
              <Arrow />
            </GearButton>
          </Tabs>
          <GridTools>
            <Tool icon="add" label="Thêm" />
            <Tool icon="view" label="Xem" />
            <Tool icon="del" label="Xóa" />
            <Tool icon="reload" label="Nạp" />
            <Arrow />
            <Sep />
            <Tool icon="penGrey" label="Ghi sổ" disabled />
            <Tool icon="penGreen" label="Bỏ ghi" />
            <Sep />
            <Tool icon="print" label="In" />
            <Sep />
            <Tool icon="mail" label="Góp ý" />
            <Sep />
            <Tool icon="help" label="Giúp" />
          </GridTools>
          <GridArea>
            <Table>
              <colgroup>
                {widths.map((w, i) => (
                  <col key={i} width={w || undefined} />
                ))}
              </colgroup>
              <thead>
                <tr>
                  {headers.map((h) => (
                    <th key={h}>{h}</th>
                  ))}
                </tr>
              </thead>
              <tbody>
                <FilterRow>
                  {headers.map((h, i) => (
                    <td key={h}>
                      <FilterCell>
                        <FilterButton $eq={i > 4} aria-label={"Lọc " + h} />
                        <input aria-label={h} defaultValue={i ? "" : "Tìm kiếm"} />
                      </FilterCell>
                    </td>
                  ))}
                </FilterRow>
                {rows.map((r, i) => (
                  <Row key={i} $on={i === 9}>
                    {r.slice(0, 6).map((t, j) => (
                      <td key={j}>{t}</td>
                    ))}
                    <td>{r[6] || "Chi tiền gửi"}</td>
                  </Row>
                ))}
              </tbody>
              <tfoot>
                <SumRow>
                  <td>Số  dòng...</td>
                  <td colSpan={4} />
                  <td>427.533.004.417</td>
                  <td />
                </SumRow>
              </tfoot>
            </Table>
            <Scroll>
              <ScrollButton $up aria-label="Lên">
                <Arrow color="#777" />
              </ScrollButton>
              <Thumb />
              <Spacer />
              <ScrollButton aria-label="Xuống">
                <Arrow color="#777" />
              </ScrollButton>
            </Scroll>
          </GridArea>
          <Lower>
            <DetailTabs>
              <DetailTab $on>
                <u>1</u>. Thông tin chung
              </DetailTab>
              <DetailTab>
                <u>2</u>. Chi tiết
              </DetailTab>
            </DetailTabs>
            <Detail>
              <FactList items={facts} w={131} />
              <FactList items={payee} w={163} />
            </Detail>
          </Lower>
        </Centre>

        <Panel>
          <PanelHead>
            <Dots />
            <h2>Khai báo thông tin ban đầu</h2>
            <button aria-label="Đóng bảng">
              <svg width="9" height="8">
                <path d="m1 .5 7 7M8 .5l-7 7" stroke="#000" strokeWidth="2" />
              </svg>
            </button>
          </PanelHead>
          <PanelBox>
            {setup.map((g) => (
              <PanelGroup key={g[0]}>
                {g.map((t) => (
                  <PanelLink key={t} href="#">
                    <Icon n="doc" />
                    {t}
                  </PanelLink>
                ))}
              </PanelGroup>
            ))}
          </PanelBox>
          <PanelBox $h={110} />
        </Panel>
      </Main>

      <Status>
        <StatusItem $mr={10}>
          <Icon n="dbOk" />
          Máy chủ : DPTRA-VDI\MISAMIMOSA2020
        </StatusItem>
        <StatusItem $mr={8}>
          <Icon n="db" />
          Tên DLKT: VP bo_2022
        </StatusItem>
        <StatusItem $mr={0}>
          <Icon n="user" />
          Người dùng: ADMIN
        </StatusItem>
        <Spacer />
        <StatusItem $mr={8}>OVR</StatusItem>
        <StatusItem $mr={77}>NUM</StatusItem>
        <StatusItem $mr={20}>
          <Icon n="clock" />
          4:58 CH
        </StatusItem>
        <StatusItem $mr={0}>12/08/2022</StatusItem>
        <ResizeGrip width="10" height="10" aria-hidden="true">
          <path d="M8 0h2v2H8zM8 4h2v2H8zM8 8h2v2H8zM4 4h2v2H4zM4 8h2v2H4zM0 8h2v2H0z" fill="#4b6284" />
        </ResizeGrip>
      </Status>

      <Chat>
        <button aria-label="Trò chuyện">
          <svg width="48" height="48" viewBox="0 0 48 48">
            <defs>
              <linearGradient id="chat" x1="0" y1="0" x2="0" y2="1">
                <stop offset="0" stopColor="#3ba0ff" />
                <stop offset="1" stopColor="#0a85fb" />
              </linearGradient>
            </defs>
            <circle cx="24" cy="24" r="24" fill="url(#chat)" />
            <path
              d="M24 10c8.500 0 15 6 15 13.700S32.500 37.500 24 37.500c-2.300 0-4.500-.5-6.300-1.300L11.500 38.700l2-5C10.600 31.200 9 27.700 9 23.700 9 16 15.500 10 24 10z"
              fill="#fff"
            />
            <g fill="#1d90fb">
              <circle cx="17" cy="24.500" r="2.300" />
              <circle cx="24.500" cy="24.500" r="2.300" />
              <circle cx="32" cy="24.500" r="2.300" />
            </g>
          </svg>
        </button>
        <ChatClose aria-label="Đóng trò chuyện">
          <svg width="15" height="15">
            <path d="m4 4 7 7M11 4l-7 7" stroke="#222" strokeWidth="1.500" />
          </svg>
        </ChatClose>
      </Chat>
    </Window>
  );
}
